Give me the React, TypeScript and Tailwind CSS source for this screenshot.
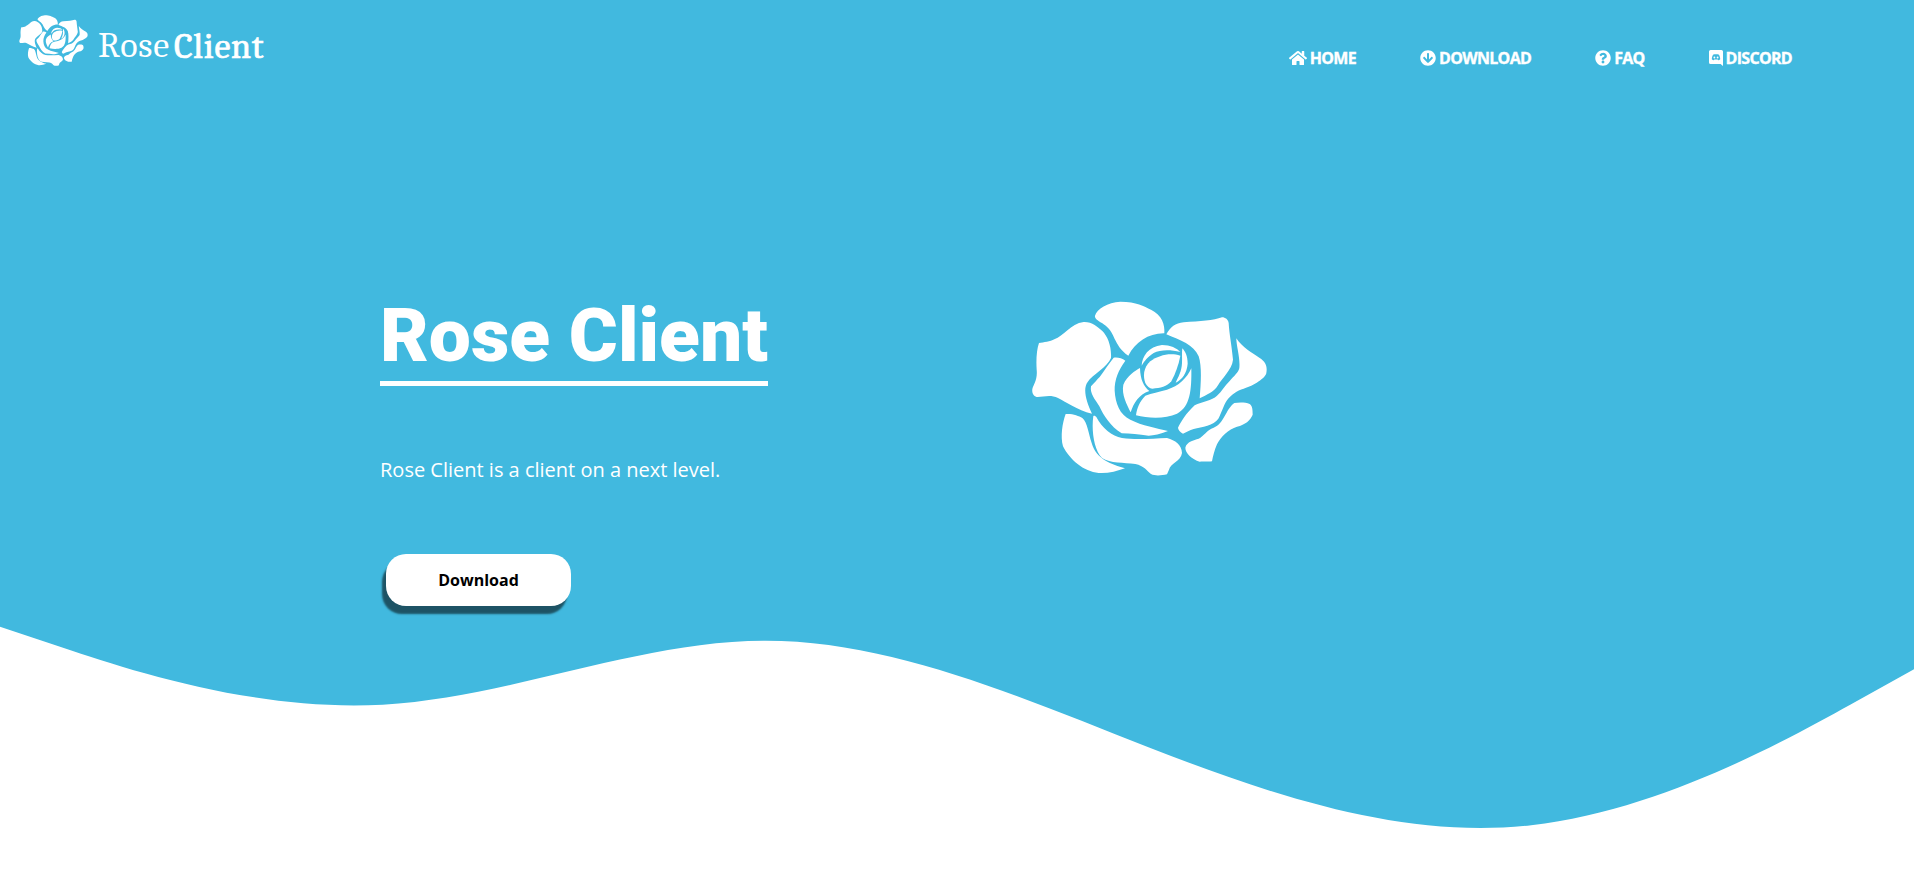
import type { ReactNode } from "react";
import { FaArrowCircleDown, FaHome, FaQuestionCircle } from "react-icons/fa";

const petals = [
  "M56 160C70 158 90 156 102 149C130 140 150 102 190 97C215 96 232 112 246 124C262 140 274 170 272 205C262 232 215 256 202 277C187 297 197 335 215 372C170 362 135 335 113 325C90 314 70 322 52 322C42 322 34 312 36 298C40 283 52 270 49 240C47 210 49 180 56 160Z",
  "M224 78C230 58 262 38 300 36C350 36 370 50 392 60C425 76 434 104 432 131C385 130 345 158 324 198C300 182 292 165 283 148C270 118 262 112 245 100C232 93 222 85 224 78Z",
  "M438 134C450 112 465 100 490 98C540 94 580 93 605 83C615 83 624 90 625 100C627 135 634 165 638 210C635 240 605 265 593 287C580 308 560 315 538 326C542 280 545 230 535 200C520 165 480 152 438 134Z",
  "M648 146C665 172 695 190 717 204C738 217 741 232 738 250C736 265 700 288 670 297C650 303 632 315 620 332C608 350 602 375 594 387C580 408 545 412 520 418C508 421 498 428 488 432C480 428 473 420 473 414C482 396 498 370 523 347C545 335 575 333 590 318C605 305 614 287 628 274C640 260 655 248 657 235C660 205 648 170 648 146Z",
  "M642 340C655 338 675 337 688 343C696 348 697 360 697 375C690 392 675 405 650 411C625 418 600 443 590 464C582 482 578 500 575 515C562 517 550 514 538 516C515 508 495 492 495 474C500 455 520 452 535 447C550 440 560 420 580 414C612 402 615 360 642 340Z",
  "M280 204C292 202 305 206 315 213C295 240 282 270 283 303C285 340 298 375 330 390C365 408 410 415 443 424C420 433 400 438 385 438C355 434 330 432 304 431C270 410 250 378 237 350C225 330 208 312 212 290C222 280 230 270 238 262C252 243 265 222 280 204Z",
  "M136 373C155 371 175 378 186 385C202 400 204 430 214 460C228 510 275 524 314 536C290 545 260 552 235 550C190 546 148 510 128 470C120 440 126 400 136 373Z",
  "M219 379C222 377 224 378 228 382C245 415 275 440 305 445C350 452 400 446 440 445C465 452 484 465 485 490C482 515 450 520 446 540L440 554C425 557 405 560 392 553C380 545 372 528 345 523C310 518 270 522 245 505C220 480 213 420 219 379Z",
  "M359 235C345 243 320 258 309 285C303 315 320 345 331 368C340 340 355 315 387 304C370 290 360 270 359 235Z",
  "M513 236C500 265 475 290 440 300C415 307 395 310 375 318C358 335 350 355 347 377C385 386 435 388 470 372C510 352 514 300 513 236Z",
  "M480 198C450 188 415 196 390 215C368 235 368 262 375 280C380 290 388 297 396 297C420 295 440 291 453 275C466 250 475 225 480 198Z",
  "M364 228C365 200 385 170 425 166C450 166 470 176 480 187C450 180 420 180 400 190C382 201 372 215 364 228Z",
  "M486 176C495 185 502 200 502 222C500 250 485 270 466 279C474 262 484 245 485 220C486 205 484 190 486 176Z",
];

function Rose({ className }: { className: string }) {
  return (
    <svg viewBox="35 34 705 525" fill="currentColor" className={className} aria-hidden="true">
      {petals.map((d) => (
        <path key={d} d={d} />
      ))}
    </svg>
  );
}

function DiscordIcon() {
  return (
    <svg viewBox="0 0 14 16" className="h-4 w-3.5" aria-hidden="true">
      <path fill="currentColor" d="M1.600 0h10.800A1.600 1.600 0 0 1 14 1.600V16l-2.400-2H1.600A1.600 1.600 0 0 1 0 12.400V1.600A1.600 1.600 0 0 1 1.600 0Z" />
      <path
        fill="#41b9df"
        fillRule="evenodd"
        d="M4.300 4.500C5.200 4 8.800 4 9.700 4.500C10.700 5.800 11.200 7.500 11.200 9.300C10.600 10 9.900 10.200 9.200 10.200L8.600 9.400H5.400L4.800 10.200C4.100 10.200 3.400 10 2.800 9.300C2.800 7.500 3.300 5.800 4.300 4.500ZM5.400 6.600a.9.9 0 1 0 0 1.800a.9.9 0 0 0 0-1.800ZM8.600 6.600a.9.9 0 1 0 0 1.800a.9.9 0 0 0 0-1.800Z"
      />
    </svg>
  );
}

function NavItem({ icon, label }: { icon: ReactNode; label: string }) {
  return (
    <a href="#" className="flex items-center gap-[3px]">
      {icon}
      <span>{label}</span>
    </a>
  );
}

export default function App() {
  return (
    <div className="relative flex h-[870px] flex-col overflow-hidden bg-[#41b9df] font-['Open_Sans',sans-serif] text-white">
      <svg
        viewBox="0 0 1440 279"
        preserveAspectRatio="none"
        className="absolute bottom-0 left-0 h-[371px] w-full"
        aria-hidden="true"
      >
        <path
          fill="#fff"
          d="M0 96L48 112C96 128 192 160 288 154.670C384 149.330 480 106.670 576 106.670C672 106.670 768 149.330 864 186.670C960 224 1056 256 1152 245.330C1248 234.670 1344 181.330 1392 154.670L1440 128V279H0Z"
        />
      </svg>

      <header className="relative flex h-[116px] items-start justify-between pr-[122px] pl-[19px]">
        <a href="#" className="flex items-start pt-[15px]">
          <Rose className="h-[51px] w-[69px]" />
          <span className="ml-[10px] flex gap-[4px] font-['Cambria','Caladea',serif] text-[36px] leading-[62px]">
            <span className="tracking-[0.8px]">Rose</span>
            <span className="pt-px tracking-[0.7px] [-webkit-text-stroke:0.7px_white]">Client</span>
          </span>
        </a>
        <nav className="flex h-[116px] items-center gap-[64px] text-base font-bold tracking-[-0.7px] [-webkit-text-stroke:0.35px_white]">
          <NavItem icon={<FaHome className="size-[18px]" />} label="HOME" />
          <NavItem icon={<FaArrowCircleDown className="size-4" />} label="DOWNLOAD" />
          <NavItem icon={<FaQuestionCircle className="size-4" />} label="FAQ" />
          <NavItem icon={<DiscordIcon />} label="DISCORD" />
        </nav>
      </header>

      <main className="relative flex items-start pl-[380px]">
        <section className="flex w-[652px] flex-col items-start pt-[175px]">
          <h1 className="border-b-[5px] border-white font-['Roboto',sans-serif] text-[74.900px] leading-[90px] font-black">
            Rose Client
          </h1>
          <p className="mt-[70px] text-[20px] leading-[27px]">Rose Client is a client on a next level.</p>
          <button className="mt-[71px] ml-[6px] h-[52px] w-[185px] rounded-[20px] bg-white text-base font-bold text-black shadow-[-4px_8px_2px_rgba(0,0,0,0.55)]">
            Download
          </button>
        </section>
        <Rose className="mt-[185px] h-[175px] w-[235px]" />
      </main>
    </div>
  );
}
